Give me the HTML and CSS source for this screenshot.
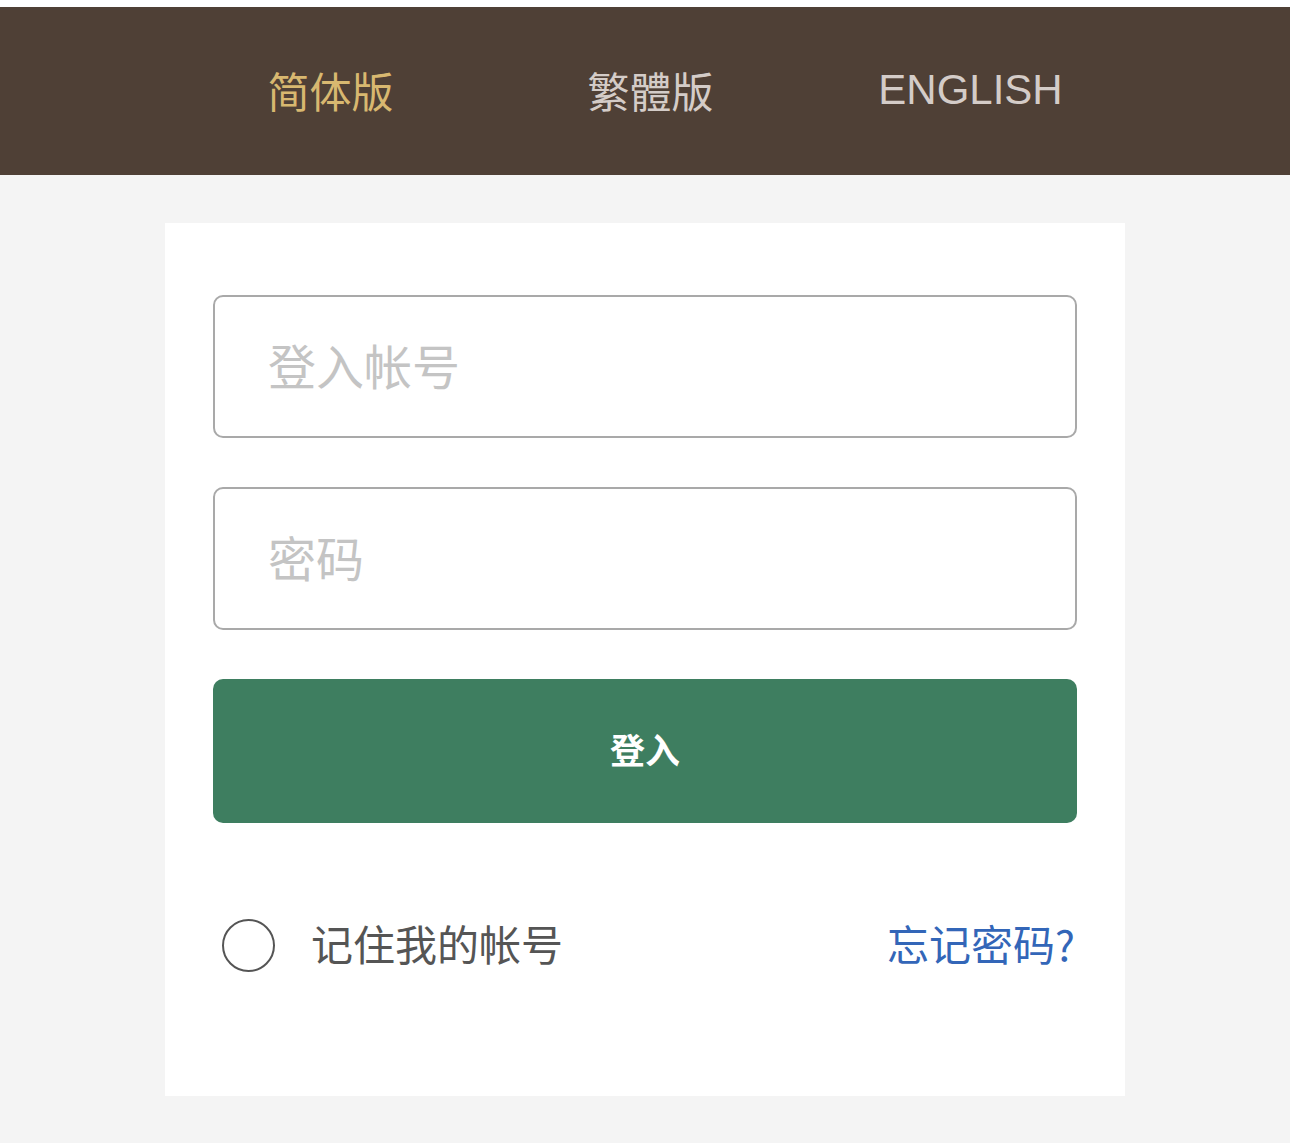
FILE: index.html
```html
<!DOCTYPE html>
<html lang="zh-CN">
<head>
<meta charset="utf-8">
<title>登入</title>
<link rel="stylesheet" href="styles.css">
</head>
<body>
<header class="topbar">
  <nav class="lang-nav">
    <a class="lang active" href="#">简体版</a>
    <a class="lang" href="#">繁體版</a>
    <a class="lang en" href="#">ENGLISH</a>
  </nav>
</header>
<main class="main">
  <form class="card">
    <input class="field" type="text" placeholder="登入帐号">
    <input class="field" type="password" placeholder="密码">
    <button class="submit" type="button">登入</button>
    <div class="options">
      <label class="remember">
        <span class="radio"></span>
        <span class="remember-text">记住我的帐号</span>
      </label>
      <a class="forgot" href="#">忘记密码?</a>
    </div>
  </form>
</main>
</body>
</html>
```

FILE: styles.css
```css
* {
  box-sizing: border-box;
}

html, body {
  margin: 0;
  padding: 0;
}

body {
  background: #f4f4f4;
  border-top: 7px solid #ffffff;
  font-family: "Noto Sans CJK SC", "Noto Sans", sans-serif;
  min-height: 1143px;
}

.topbar {
  background: #4f4036;
  height: 168px;
  display: flex;
  justify-content: center;
  align-items: center;
}

.lang-nav {
  width: 960px;
  display: flex;
  margin-left: 11px;
}

.lang {
  flex: 1;
  text-align: center;
  font-size: 42px;
  line-height: 1;
  color: #d4ccc8;
  text-decoration: none;
  padding-bottom: 2px;
}

.lang.active {
  color: #d8b870;
}

.lang.en {
  font-family: "Liberation Sans", Arial, sans-serif;
}

.main {
  display: flex;
  justify-content: center;
  padding-top: 48px;
}

.card {
  width: 960px;
  background: #ffffff;
  padding: 72px 48px 124px;
  display: flex;
  flex-direction: column;
}

.field {
  height: 143px;
  border: 2px solid #a9a9a9;
  border-radius: 10px;
  padding: 0 0 6px 53px;
  font-family: "Noto Sans CJK SC", "Noto Sans", sans-serif;
  font-size: 48px;
  color: #333;
  background: #fff;
  outline: none;
  margin: 0 0 49px;
}

.field::placeholder {
  color: #c4c4c4;
}

.submit {
  height: 144px;
  border: none;
  border-radius: 10px;
  background: #3e7e60;
  color: #ffffff;
  font-family: "Noto Sans CJK SC", "Noto Sans", sans-serif;
  font-size: 35px;
  font-weight: 700;
  cursor: pointer;
  padding: 0 0 5px;
}

.options {
  margin-top: 96px;
  display: flex;
  align-items: center;
  justify-content: space-between;
  height: 53px;
}

.remember {
  display: flex;
  align-items: center;
}

.radio {
  width: 53px;
  height: 53px;
  border: 2px solid #555555;
  border-radius: 50%;
  margin-left: 9px;
  margin-right: 36px;
}

.remember-text {
  font-size: 42px;
  line-height: 1;
  color: #555555;
  padding-bottom: 6px;
}

.forgot {
  font-size: 42px;
  line-height: 1;
  color: #3366b8;
  text-decoration: none;
  margin-right: 2px;
  padding-bottom: 6px;
}
```
